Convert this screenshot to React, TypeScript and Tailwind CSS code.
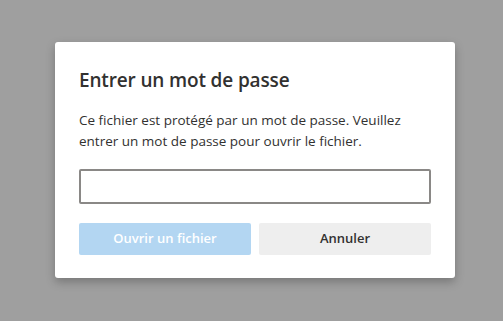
import React from 'react';

export default function App() {
  return (
    <div
      className="w-[503px] h-[321px] bg-[#9f9f9f] pt-[42px] pl-[55px]"
      style={{ fontFamily: '"Open Sans", "Noto Sans", sans-serif' }}
    >
      <div className="w-[400px] bg-white rounded-[3px] shadow-[0_4px_10px_rgba(0,0,0,0.25)] px-6 pt-[24px] pb-[23px] text-[#323130]">
        <h1 className="text-[19px] leading-[28px] font-semibold tracking-[-0.15px]">Entrer un mot de passe</h1>
        <p className="mt-[16px] text-[13.5px] leading-[21px]">
          Ce fichier est protégé par un mot de passe. Veuillez entrer un mot de passe pour ouvrir le fichier.
        </p>
        <input
          type="password"
          className="mt-[17px] block w-full h-[35px] border-2 border-[#8a8886] rounded-[2px] outline-none px-2"
        />
        <div className="mt-[19px] flex gap-2">
          <button className="flex-1 h-8 rounded-[2px] bg-[#b3d6f2] text-white text-[13px] font-semibold">
            Ouvrir un fichier
          </button>
          <button className="flex-1 h-8 rounded-[2px] bg-[#eeeeee] text-[#323130] text-[13px] font-semibold">
            Annuler
          </button>
        </div>
      </div>
    </div>
  );
}
